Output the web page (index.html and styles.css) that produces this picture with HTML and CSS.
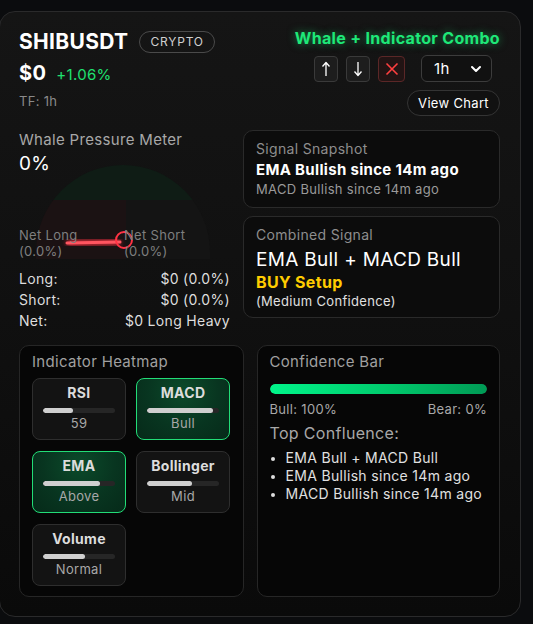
FILE: index.html
```html
<!DOCTYPE html>
<html>
<head>
<meta charset="utf-8">
<link rel="stylesheet" href="styles.css">
</head>
<body>
<div class="card">
  <div class="header">
    <div class="h-left">
      <div class="title-row">
        <span class="symbol">SHIBUSDT</span>
        <span class="badge">CRYPTO</span>
      </div>
      <div class="price-row">
        <span class="price">$0</span>
        <span class="change">+1.06%</span>
      </div>
      <div class="tf">TF: 1h</div>
    </div>
    <div class="h-right">
      <div class="combo">Whale + Indicator Combo</div>
      <div class="controls">
        <button class="icon-btn" aria-label="up">
          <svg width="10" height="16" viewBox="0 0 10 16"><path d="M5 15 V2 M1.5 5.5 L5 1.5 L8.5 5.5" stroke="#fff" stroke-width="1.3" fill="none" stroke-linejoin="round"/></svg>
        </button>
        <button class="icon-btn" aria-label="down">
          <svg width="10" height="16" viewBox="0 0 10 16"><path d="M5 1 V14 M1.5 10.5 L5 14.5 L8.5 10.5" stroke="#fff" stroke-width="1.3" fill="none" stroke-linejoin="round"/></svg>
        </button>
        <button class="icon-btn close" aria-label="close">
          <svg width="14" height="14" viewBox="0 0 14 14"><path d="M1.5 1.5 L12.5 12.5 M12.5 1.5 L1.5 12.5" stroke="#ff4040" stroke-width="1.6" fill="none"/></svg>
        </button>
        <div class="select">
          <span>1h</span>
          <svg width="12" height="8" viewBox="0 0 12 8"><path d="M2 2 L6 6 L10 2" stroke="#fff" stroke-width="2" fill="none" stroke-linecap="round" stroke-linejoin="round"/></svg>
        </div>
      </div>
      <button class="view-chart">View Chart</button>
    </div>
  </div>

  <div class="mid">
    <div class="whale">
      <div class="sec-title">Whale Pressure Meter</div>
      <div class="pct">0%</div>
      <div class="gauge">
        <svg width="174" height="95" viewBox="0 0 174 95">
          <defs>
            <clipPath id="semi"><path d="M0 88 A87 87 0 0 1 174 88 L174 95 L0 95 Z"/></clipPath>
            <filter id="glow" x="-50%" y="-300%" width="200%" height="700%"><feGaussianBlur stdDeviation="2.5"/></filter>
          </defs>
          <g clip-path="url(#semi)">
            <rect x="0" y="0" width="174" height="36" fill="#0f1c15"/>
            <rect x="0" y="36" width="90" height="60" fill="#1b1213"/>
            <rect x="90" y="36" width="84" height="60" fill="#141414"/>
          </g>
          <line x1="31" y1="79" x2="84" y2="78" stroke="#ff2f40" stroke-width="5" filter="url(#glow)"/>
          <line x1="31" y1="79" x2="84" y2="78" stroke="#ff5560" stroke-width="3" stroke-linecap="round"/>
          <circle cx="88" cy="76" r="8" stroke="#ff3344" stroke-width="2" fill="none"/>
        </svg>
      </div>
      <div class="gauge-labels">
        <div class="gl gl-long">Net Long<br>(0.0%)</div>
        <div class="gl">Net Short<br>(0.0%)</div>
      </div>
      <div class="stats">
        <div class="stat"><span>Long:</span><span>$0 (0.0%)</span></div>
        <div class="stat"><span>Short:</span><span>$0 (0.0%)</span></div>
        <div class="stat"><span>Net:</span><span>$0 Long Heavy</span></div>
      </div>
    </div>
    <div class="signals">
      <div class="box snapshot">
        <div class="box-title">Signal Snapshot</div>
        <div class="snap-main">EMA Bullish since 14m ago</div>
        <div class="snap-sub">MACD Bullish since 14m ago</div>
      </div>
      <div class="box combined">
        <div class="box-title">Combined Signal</div>
        <div class="comb-main">EMA Bull + MACD Bull</div>
        <div class="comb-buy">BUY Setup</div>
        <div class="comb-conf">(Medium Confidence)</div>
      </div>
    </div>
  </div>

  <div class="bottom">
    <div class="panel heatmap">
      <div class="panel-title">Indicator Heatmap</div>
      <div class="tiles">
        <div class="tile">
          <div class="t-name">RSI</div>
          <div class="t-bar"><div class="t-fill" style="width:42%"></div></div>
          <div class="t-val">59</div>
        </div>
        <div class="tile active">
          <div class="t-name">MACD</div>
          <div class="t-bar"><div class="t-fill" style="width:92%"></div></div>
          <div class="t-val">Bull</div>
        </div>
        <div class="tile active">
          <div class="t-name">EMA</div>
          <div class="t-bar"><div class="t-fill" style="width:79%"></div></div>
          <div class="t-val">Above</div>
        </div>
        <div class="tile">
          <div class="t-name">Bollinger</div>
          <div class="t-bar"><div class="t-fill" style="width:63%"></div></div>
          <div class="t-val">Mid</div>
        </div>
        <div class="tile">
          <div class="t-name">Volume</div>
          <div class="t-bar"><div class="t-fill" style="width:58%"></div></div>
          <div class="t-val">Normal</div>
        </div>
      </div>
    </div>
    <div class="panel confidence">
      <div class="panel-title">Confidence Bar</div>
      <div class="conf-bar"><div class="conf-fill" style="width:100%"></div></div>
      <div class="conf-legend"><span>Bull: 100%</span><span>Bear: 0%</span></div>
      <div class="top-conf">Top Confluence:</div>
      <ul class="conf-list">
        <li>EMA Bull + MACD Bull</li>
        <li>EMA Bullish since 14m ago</li>
        <li>MACD Bullish since 14m ago</li>
      </ul>
    </div>
  </div>
</div>
</body>
</html>
```

FILE: styles.css
```css
* { box-sizing: border-box; }
html, body { margin: 0; padding: 0; }
body {
  background: #0b0c0e;
  font-family: Inter, "Noto Sans", "Liberation Sans", sans-serif;
  letter-spacing: 0.02em;
  color: #fff;
  padding-top: 11px;
  width: 533px;
  height: 624px;
  overflow: hidden;
}
button { font-family: inherit; letter-spacing: inherit; cursor: pointer; }

.card {
  width: 522px;
  height: 606px;
  margin-left: -1px;
  border: 1px solid #2a2a2b;
  border-radius: 16px;
  background: linear-gradient(180deg, #151515 0%, #101010 50%, #0a0a0a 100%);
  padding: 17px 20px 0 19px;
  display: flex;
  flex-direction: column;
}

/* header */
.header { display: flex; justify-content: space-between; }
.h-left { display: flex; flex-direction: column; }
.title-row { display: flex; align-items: center; gap: 11px; height: 26px; }
.symbol { font-size: 21px; font-weight: 700; line-height: 26px; }
.badge {
  font-size: 12px;
  letter-spacing: 0.8px;
  color: #d0d0d0;
  border: 1px solid #4a4a4a;
  border-radius: 11px;
  height: 22px;
  line-height: 20px;
  padding: 0 10px;
}
.price-row { display: flex; align-items: baseline; gap: 10px; margin-top: 6px; line-height: 24px; }
.price { font-size: 20px; font-weight: 700; }
.change { font-size: 15px; color: #1fe070; }
.tf { font-size: 13px; color: #8a8a8a; line-height: 18px; margin-top: 5px; }

.h-right { display: flex; flex-direction: column; align-items: flex-end; }
.combo {
  font-size: 16px;
  font-weight: 700;
  color: #1ee878;
  line-height: 22px;
  margin-top: -2px;
  text-shadow: 0 0 8px rgba(30, 232, 120, 0.55);
}
.controls { display: flex; align-items: center; margin-top: 6px; margin-right: 8px; }
.icon-btn {
  width: 24px;
  height: 26px;
  padding: 0;
  margin-right: 8px;
  background: #1d1d1d;
  border: 1px solid #3a3a3a;
  border-radius: 4px;
  display: flex;
  align-items: center;
  justify-content: center;
}
.icon-btn svg { display: block; }
.icon-btn.close {
  width: 27px;
  margin-right: 16px;
  background: #221414;
  border-color: #5b2727;
}
.select {
  width: 71px;
  height: 27px;
  border: 1px solid #3c3c3c;
  border-radius: 6px;
  background: #111;
  display: flex;
  align-items: center;
  justify-content: space-between;
  padding: 0 9px 0 12px;
  font-size: 15px;
}
.view-chart {
  margin-top: 8px;
  height: 26px;
  width: 93px;
  border: 1px solid #343434;
  border-radius: 13px;
  background: #111;
  color: #fff;
  font-size: 13px;
  padding: 0;
}

/* mid */
.mid { display: flex; gap: 13px; margin-top: 14px; }
.whale { width: 211px; display: flex; flex-direction: column; }
.sec-title { font-size: 15px; color: #a8a8a8; line-height: 20px; }
.pct { font-size: 19px; line-height: 24px; margin-top: 2px; }
.gauge { height: 95px; margin-top: -12px; margin-left: 17px; }
.gauge svg { display: block; overflow: visible; }
.gauge-labels { display: flex; margin-top: -32px; position: relative; }
.gl { font-size: 13px; color: #7f7f7f; line-height: 16px; }
.gl-long { width: 105px; }
.stats { margin-top: 9px; }
.stat { display: flex; justify-content: space-between; font-size: 14px; color: #dedede; line-height: 21px; }

.signals { width: 257px; display: flex; flex-direction: column; gap: 8px; }
.box {
  border: 1px solid #2a2a2a;
  border-radius: 10px;
  background: #0c0c0c;
  padding: 9px 12px 0 12px;
}
.snapshot { height: 78px; }
.combined { height: 102px; }
.box-title { font-size: 14px; color: #8e8e8e; line-height: 18px; }
.snap-main { font-size: 15px; font-weight: 700; line-height: 21px; margin-top: 1px; }
.snap-sub { font-size: 13px; color: #9a9a9a; line-height: 18px; }
.comb-main { font-size: 19px; line-height: 25px; margin-top: 3px; }
.comb-buy { font-size: 16px; font-weight: 700; color: #ffcc00; line-height: 20px; }
.comb-conf { font-size: 13px; color: #e0e0e0; line-height: 18px; }

/* bottom */
.bottom { display: flex; gap: 13px; margin-top: 14px; }
.panel {
  height: 252px;
  border: 1px solid #262626;
  border-radius: 10px;
  background: #060606;
  padding: 6px 12px 0 12px;
}
.heatmap { width: 225px; }
.confidence { width: 244px; }
.panel-title { font-size: 15px; color: #a0a0a0; line-height: 20px; }

.tiles {
  display: grid;
  grid-template-columns: 94px 94px;
  column-gap: 10px;
  row-gap: 11px;
  margin-top: 6px;
}
.tile {
  height: 62px;
  border: 1px solid #2e2e2e;
  border-radius: 8px;
  background: #131313;
  padding-top: 5px;
  display: flex;
  flex-direction: column;
  align-items: center;
}
.tile.active {
  border-color: #22dd77;
  background: radial-gradient(ellipse at 50% 20%, #0b4a2a 0%, #083520 55%, #062a19 100%);
}
.t-name { font-size: 14px; font-weight: 700; color: #dcdcdc; line-height: 18px; }
.t-bar { width: 72px; height: 5px; border-radius: 3px; background: #262626; margin-top: 6px; overflow: hidden; }
.t-fill { height: 100%; background: #cfcfcf; border-radius: 3px; }
.t-val { font-size: 13px; color: #a8a8a8; line-height: 18px; margin-top: 1px; }

.conf-bar { height: 10px; border-radius: 5px; background: #1a1a1a; margin-top: 12px; overflow: hidden; }
.conf-fill { height: 100%; border-radius: 5px; background: linear-gradient(90deg, #00f58a 0%, #00c96c 55%, #009a55 100%); }
.conf-legend { display: flex; justify-content: space-between; font-size: 13px; color: #a8a8a8; line-height: 18px; margin-top: 6px; }
.top-conf { font-size: 16px; color: #a8a8a8; line-height: 20px; margin-top: 5px; }
.conf-list { margin: 6px 0 0 0; padding: 0 0 0 16px; font-size: 14px; color: #e0e0e0; line-height: 18px; }
.conf-list li::marker { color: #ddd; font-size: 12px; }
```
